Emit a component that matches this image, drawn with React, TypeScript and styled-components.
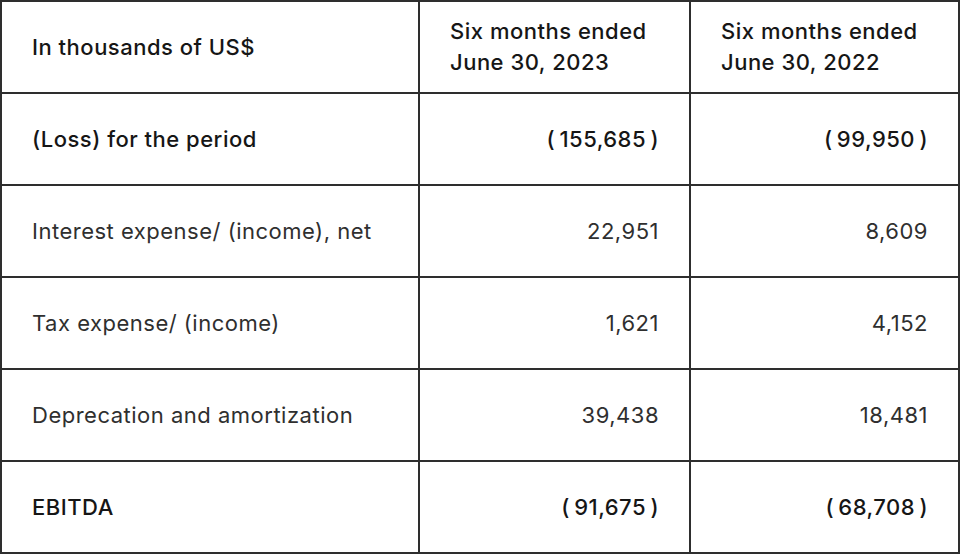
import React from "react";
import styled, { createGlobalStyle } from "styled-components";

const Global = createGlobalStyle`
  html, body { margin: 0; padding: 0; background: #fff; }
  body { font-family: "Inter", "Noto Sans", sans-serif; }
`;

const Table = styled.div`
  width: 960px;
  height: 554px;
  box-sizing: border-box;
  display: grid;
  grid-template-columns: 418px 271px 1fr;
  grid-template-rows: repeat(6, 92px);
  border-top: 2px solid #2e2e2e;
  border-left: 2px solid #2e2e2e;
`;

const Cell = styled.div<{ $align?: "left" | "right"; $bold?: boolean }>`
  box-sizing: border-box;
  border-right: 2px solid #2e2e2e;
  border-bottom: 2px solid #2e2e2e;
  display: flex;
  align-items: center;
  justify-content: ${(p) => (p.$align === "right" ? "flex-end" : "flex-start")};
  padding: 0 ${(p) => (p.$align === "right" ? "30px" : "28px")} 0 30px;
  font-size: 22px;
  letter-spacing: 0.5px;
  line-height: 31px;
  color: ${(p) => (p.$bold ? "#161616" : "#2f2f2f")};
  font-weight: ${(p) => (p.$bold ? 500 : 400)};
  white-space: pre;
`;

const HeaderCell = styled(Cell)`
  font-weight: 500;
  color: #161616;
`;

type Row = { label: string; a: string; b: string; bold?: boolean };

const rows: Row[] = [
  { label: "(Loss) for the period", a: "(\u2009155,685\u2009)", b: "(\u200999,950\u2009)", bold: true },
  { label: "Interest expense/ (income), net", a: "22,951", b: "8,609" },
  { label: "Tax expense/ (income)", a: "1,621", b: "4,152" },
  { label: "Deprecation and amortization", a: "39,438", b: "18,481" },
  { label: "EBITDA", a: "(\u200991,675\u2009)", b: "(\u200968,708\u2009)", bold: true },
];

export default function App() {
  return (
    <>
      <Global />
      <Table>
        <HeaderCell>In thousands of US$</HeaderCell>
        <HeaderCell>{"Six months ended\nJune 30, 2023"}</HeaderCell>
        <HeaderCell>{"Six months ended\nJune 30, 2022"}</HeaderCell>
        {rows.map((r) => (
          <React.Fragment key={r.label}>
            <Cell $bold={r.bold}>{r.label}</Cell>
            <Cell $align="right" $bold={r.bold}>{r.a}</Cell>
            <Cell $align="right" $bold={r.bold}>{r.b}</Cell>
          </React.Fragment>
        ))}
      </Table>
    </>
  );
}
